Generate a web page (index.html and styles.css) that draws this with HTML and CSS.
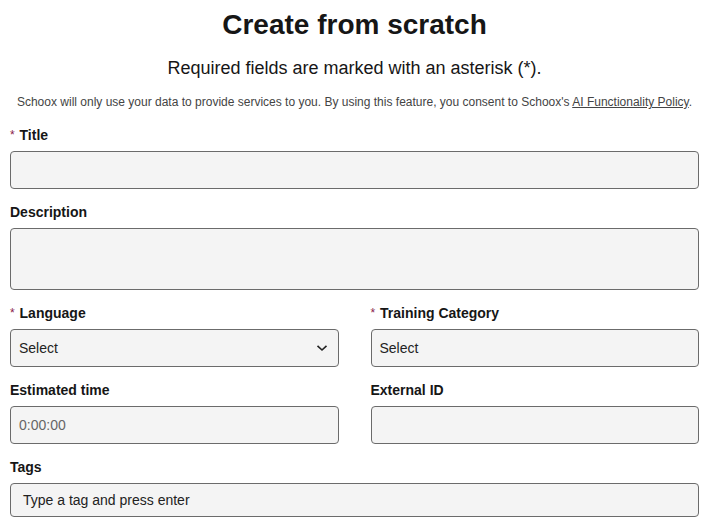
FILE: index.html
```html
<!DOCTYPE html>
<html>
<head>
<meta charset="utf-8">
<link rel="stylesheet" href="styles.css">
</head>
<body>
<main class="page">
  <h1 class="title">Create from scratch</h1>
  <p class="subtitle">Required fields are marked with an asterisk (*).</p>
  <p class="notice">Schoox will only use your data to provide services to you. By using this feature, you consent to Schoox's <a href="#" class="policy">AI Functionality Policy</a>.</p>

  <div class="field">
    <label class="label"><span class="req">*</span> Title</label>
    <div class="input"></div>
  </div>
  <div class="field">
    <label class="label">Description</label>
    <div class="input textarea"></div>
  </div>
  <div class="row">
    <div class="field">
      <label class="label"><span class="req">*</span> Language</label>
      <div class="input select">
        <span class="value">Select</span>
        <svg class="chev" width="12" height="8" viewBox="0 0 12 8"><path d="M1.5 1.8 L6 6 L10.5 1.8" fill="none" stroke="#222" stroke-width="1.6"/></svg>
      </div>
    </div>
    <div class="field">
      <label class="label"><span class="req">*</span> Training Category</label>
      <div class="input"><span class="value">Select</span></div>
    </div>
  </div>
  <div class="row">
    <div class="field">
      <label class="label">Estimated time</label>
      <div class="input"><span class="value muted">0:00:00</span></div>
    </div>
    <div class="field">
      <label class="label">External ID</label>
      <div class="input"></div>
    </div>
  </div>
  <div class="field">
    <label class="label">Tags</label>
    <div class="input tags"><span class="value">Type a tag and press enter</span></div>
  </div>
</main>
</body>
</html>
```

FILE: styles.css
```css
* { box-sizing: border-box; }
body {
  margin: 0;
  font-family: "Liberation Sans", Arial, sans-serif;
  color: #161616;
  background: #fff;
}
.page {
  padding: 0 10px;
}
.title {
  margin: 8px 0 0;
  text-align: center;
  font-size: 28px;
  line-height: 34px;
  font-weight: bold;
}
.subtitle {
  margin: 15px 0 0;
  text-align: center;
  font-size: 18px;
  line-height: 22px;
}
.notice {
  margin: 15px 0 0;
  text-align: center;
  font-size: 12px;
  line-height: 16px;
  color: #444;
}
.policy {
  color: #444;
  text-decoration: underline;
}
.field {
  display: flex;
  flex-direction: column;
  margin-top: 14px;
}
.notice + .field { margin-top: 16px; }
.label {
  font-size: 14px;
  line-height: 18px;
  font-weight: bold;
  margin-bottom: 7px;
}
.req {
  color: #8a1c4a;
  font-weight: normal;
  font-size: 12px;
  vertical-align: 1px;
  margin-right: 1px;
}
.input {
  height: 38px;
  background: #f4f4f4;
  border: 1px solid #6b6b6b;
  border-radius: 4px;
  display: flex;
  align-items: center;
  padding: 0 8px;
  font-size: 14px;
}
.textarea { height: 62px; }
.tags { height: 34px; padding: 0 12px; }
.value { color: #222; }
.muted { color: #666; }
.select { justify-content: space-between; padding-right: 10px; }
.row {
  display: grid;
  grid-template-columns: 1fr 1fr;
  column-gap: 32px;
}
```
